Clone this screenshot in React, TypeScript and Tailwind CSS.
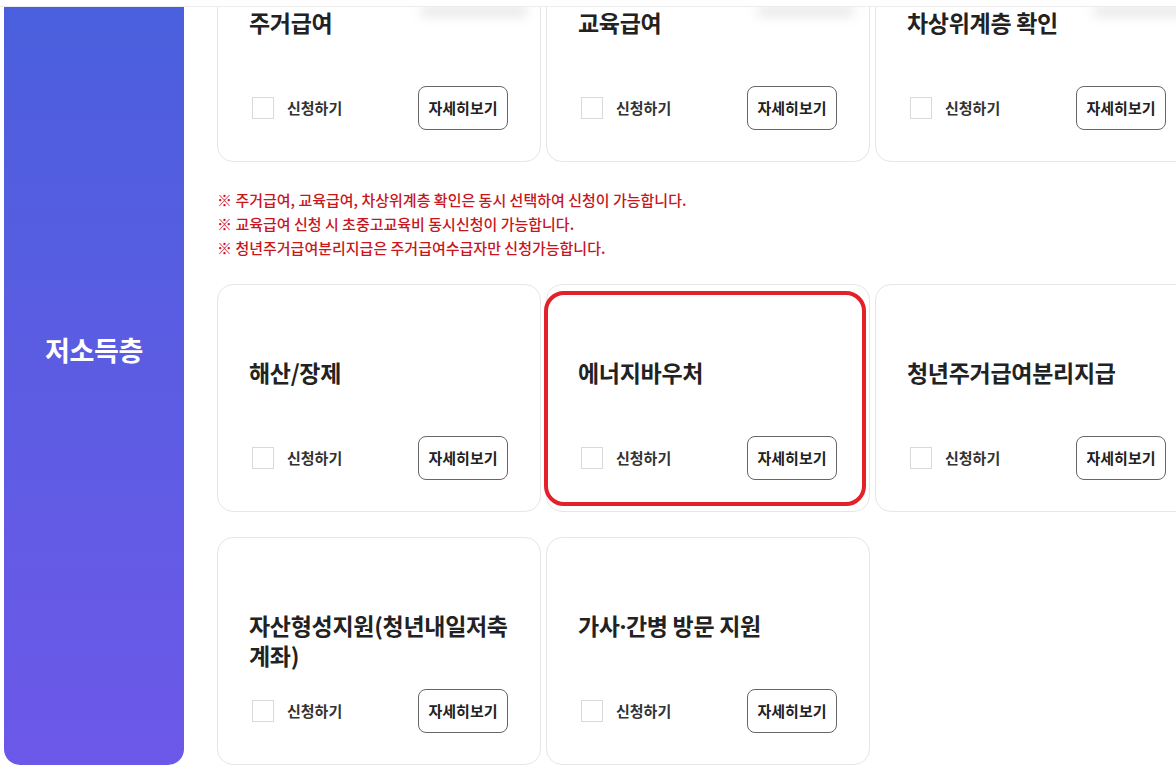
import React from "react";

type CardProps = { title: React.ReactNode; highlight?: boolean };

function Card({ title, highlight }: CardProps) {
  return (
    <div className="relative flex h-[228px] flex-col justify-between rounded-[16px] border border-[#e6e6e6] bg-white pb-[31px] pl-[31px] pr-[32px] pt-[72px]">
      <div className="whitespace-nowrap text-[23px] font-bold leading-[30px] tracking-[-0.3px] text-[#222]">{title}</div>
      <div className="flex items-center justify-between">
        <div className="flex items-center">
          <span className="ml-[3px] block h-[22px] w-[22px] border border-[#d9d9d9] bg-white" />
          <span className="ml-[13px] text-[15px] font-semibold text-[#333]">신청하기</span>
        </div>
        <button className="flex h-[44px] w-[90px] items-center justify-center rounded-[8px] border-[1.5px] border-[#666] bg-white text-[15px] font-semibold text-[#222]">
          자세히보기
        </button>
      </div>
      {highlight && (
        <div className="pointer-events-none absolute -left-[3px] bottom-[5px] right-[3px] top-[6px] rounded-[20px] border-[4px] border-[#e2212b]" />
      )}
    </div>
  );
}

export default function App() {
  return (
    <div className="relative h-[783px] w-[1176px] overflow-hidden bg-white font-['Noto_Sans_CJK_KR','Noto_Sans',sans-serif]">
      <div className="-mt-[66px] flex pl-[4px]">
        <aside className="flex w-[180px] shrink-0 items-center justify-center rounded-b-[16px] bg-gradient-to-b from-[#4660dc] to-[#6c58e9]">
          <span className="pt-[2px] text-[27px] font-bold tracking-[-0.3px] text-white">저소득층</span>
        </aside>
        <main className="ml-[33px] w-[982px] shrink-0">
          <div className="grid grid-cols-[324px_324px_324px] gap-x-[5px]">
            <Card title="주거급여" />
            <Card title="교육급여" />
            <Card title="차상위계층 확인" />
          </div>
          <div className="mb-[24px] mt-[26px] text-[15px] font-medium leading-[24px] text-[#c8161d]">
            <p>※ 주거급여, 교육급여, 차상위계층 확인은 동시 선택하여 신청이 가능합니다.</p>
            <p>※ 교육급여 신청 시 초중고교육비 동시신청이 가능합니다.</p>
            <p>※ 청년주거급여분리지급은 주거급여수급자만 신청가능합니다.</p>
          </div>
          <div className="grid grid-cols-[324px_324px_324px] gap-x-[5px] gap-y-[25px]">
            <Card title="해산/장제" />
            <Card title="에너지바우처" highlight />
            <Card title="청년주거급여분리지급" />
            <Card
              title={
                <>
                  <span className="block">자산형성지원(청년내일저축</span>
                  <span className="block">계좌)</span>
                </>
              }
            />
            <Card
              title={
                <>
                  가사<span className="font-['Noto_Sans',sans-serif]">·</span>간병 방문 지원
                </>
              }
            />
          </div>
        </main>
      </div>
      <div className="pointer-events-none absolute left-[420px] top-[6px] h-[10px] w-[108px] rounded-full bg-black/10 blur-[6px]" />
      <div className="pointer-events-none absolute left-[757px] top-[6px] h-[10px] w-[98px] rounded-full bg-black/10 blur-[6px]" />
      <div className="pointer-events-none absolute left-[1093px] top-[6px] h-[10px] w-[100px] rounded-full bg-black/10 blur-[6px]" />
      <div className="absolute left-0 right-0 top-0 h-[7px] border-b border-[#ececec] bg-white" />
    </div>
  );
}
